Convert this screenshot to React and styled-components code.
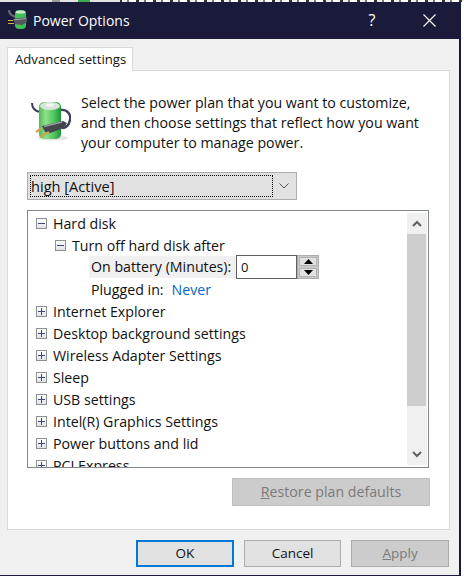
import React from "react";
import styled, { createGlobalStyle } from "styled-components";

const Global = createGlobalStyle`
  html, body { margin: 0; padding: 0; background: #fff; }
  * { box-sizing: border-box; }
`;
const Page = styled.div`
  width: 464px; height: 577px; overflow: hidden; background: #fff;
  font-family: "Open Sans", "Noto Sans", sans-serif; font-size: 14px; color: #111;
`;
const Noise = styled.div`
  height: 2px;
  background:
    linear-gradient(90deg, #e2e2e2 0 52px, #999 52px 60px, #e2e2e2 60px 78px, #3fae4a 78px 90px, #e2e2e2 90px 120px, transparent 120px),
    repeating-linear-gradient(90deg, #333 0 3px, #eee 3px 8px, #777 8px 10px, #fff 10px 17px);
`;
const Win = styled.div`
  width: 461px; height: 574px; background: #f0f0f0;
  border-right: 2px solid #1a1b3a; border-bottom: 1px solid #1a1b3a;
  display: flex; flex-direction: column;
`;
const TitleBar = styled.div`
  height: 37px; flex: none; background: #1a1b3a; color: #fff;
  display: flex; align-items: center; padding: 0 0 1px 8px;
`;
const TitleText = styled.span` font-size: 14px; margin-left: 5px; flex: 1; `;
const Help = styled.span` font-size: 16px; width: 16px; text-align: center; margin-right: 43px; `;
const CloseBox = styled.span` display: flex; margin-right: 23px; `;
const Body = styled.div`
  flex: 1; display: flex; flex-direction: column; padding: 8px 10px 0 7px;
`;
const Tab = styled.div`
  width: 126px; height: 24px; margin-bottom: -1px; position: relative; z-index: 1;
  background: #fff; border: 1px solid #d9d9d9; border-bottom: none;
  font-size: 13.15px; line-height: 23px; padding-left: 7px;
`;
const Panel = styled.div`
  width: 443px; height: 460px; background: #fff; border: 1px solid #d9d9d9;
  padding: 22px 19px 0 19px; display: flex; flex-direction: column;
`;
const Intro = styled.div` display: flex; height: 79px; `;
const IntroIcon = styled.div` width: 54px; padding: 8px 0 0 4px; flex: none; `;
const IntroText = styled.div` font-size: 14.2px; line-height: 20px; white-space: nowrap; `;
const Combo = styled.div`
  width: 270px; height: 28px; background: #e1e1e1; border: 1px solid #adadad;
  padding: 2px; display: flex; align-items: stretch;
`;
const ComboValue = styled.div`
  width: 243px; border: 1px dotted #000; font-size: 14.6px; line-height: 20px;
`;
const ComboArrow = styled.div` flex: 1; display: flex; align-items: center; justify-content: center; `;
const Tree = styled.div`
  margin-top: 10px; width: 402px; height: 258px; border: 1px solid #828790; padding: 1px 1px 2px 8px;
  display: flex; background: #fff;
`;
const Rows = styled.div` flex: 1; height: 255px; overflow: hidden; `;
const Row = styled.div`
  height: 22px; display: flex; align-items: center; padding-left: ${p => p.$indent}px;
  font-size: 14.2px; white-space: nowrap;
`;
const Toggle = styled.span`
  width: 11px; height: 11px; flex: none; margin-right: 6px; border: 1px solid #8e8f8f;
  background: linear-gradient(#fff, #dfe2e8); position: relative;
  &::before { content: ""; position: absolute; left: 1px; right: 1px; top: 4px; height: 1px; background: #3c4a80; }
  ${p => p.$plus && `&::after { content: ""; position: absolute; top: 1px; bottom: 1px; left: 4px; width: 1px; background: #3c4a80; }`}
`;
const SettingLabel = styled.span`
  width: 147px; height: 22px; margin-left: -2px; padding-left: 2px; line-height: 22px;
  background: ${p => p.$hl ? "#f0f0f0" : "transparent"};
`;
const PluggedLabel = styled.span` margin-right: 8px; `;
const LinkValue = styled.span` color: #0066cc; `;
const Spin = styled.div`
  width: 61px; height: 24px; border: 1px solid #5f5f5f; font-size: 13px; line-height: 22px; padding-left: 4px; background: #fff;
`;
const SpinBtns = styled.div`
  width: 22px; height: 24px; border: 1px solid #adadad; background: #c8c8c8; padding: 1px; display: flex; flex-direction: column; gap: 2px;
`;
const SpinBtn = styled.div`
  flex: 1; background: #e1e1e1; border: 1px solid #b4b4b4; display: flex; align-items: center; justify-content: center;
`;
const Scroll = styled.div`
  width: 20px; flex: none; margin-top: 1px; background: #f0f0f0; display: flex; flex-direction: column;
`;
const ScrollBtn = styled.div` height: 21px; flex: none; display: flex; align-items: center; justify-content: center; `;
const Thumb = styled.div` height: 172px; background: #cdcdcd; flex: none; margin-right: 1px; `;
const Track = styled.div` flex: 1; `;
const RestoreRow = styled.div` margin-top: 10px; width: 403px; display: flex; justify-content: flex-end; `;
const Restore = styled.div`
  width: 198px; height: 28px; background: #cccccc; border: 1px solid #bfbfbf; color: #7a7a7a;
  font-size: 14.2px; line-height: 26px; text-align: center;
`;
const Footer = styled.div` display: flex; padding: 10px 0 0 129px; gap: 10px; `;
const Btn = styled.div`
  height: 27px; width: 98px;
  background: ${p => p.$disabled ? "#cccccc" : "#e1e1e1"};
  border: ${p => p.$def ? "2px solid #0078d7" : "1px solid #adadad"};
  color: ${p => p.$disabled ? "#7a7a7a" : "#111"};
  font-size: 13.5px; line-height: ${p => p.$def ? 23 : 25}px; text-align: center;
`;

const PowerIcon = () => (
  <svg width="40" height="40" viewBox="0 0 40 40">
    <defs>
      <linearGradient id="battery" x1="0" x2="1" y1="0" y2="0">
        <stop offset="0" stopColor="#4fb85a" />
        <stop offset=".3" stopColor="#8fe08a" />
        <stop offset=".7" stopColor="#4cc45c" />
        <stop offset="1" stopColor="#1b9438" />
      </linearGradient>
    </defs>
    <ellipse cx="22" cy="37" rx="15" ry="2.5" fill="#e4e4e4" />
    <path d="M1 2 C1 8 4 10 9 11" fill="none" stroke="#3d3f58" strokeWidth="2" />
    <path d="M29 9 C37 8 40 14 39 19 C38 24 35 27 31 27" fill="none" stroke="#3d3f58" strokeWidth="2.4" />
    <rect x="8" y="1" width="22" height="37" rx="5" fill="url(#battery)" />
    <ellipse cx="19" cy="5" rx="10" ry="4" fill="#d7e6da" />
    <ellipse cx="19" cy="4" rx="4" ry="1.5" fill="#f4f7f4" />
    <path d="M11 25 L32 20 L36 22 L33 27 L19 32 L14 31 Z" fill="#44464f" />
    <path d="M13 25.5 L31 21" stroke="#9a9ca4" strokeWidth="1.6" />
    <path d="M11 27 L5 31 M18 31 L9 36" stroke="#c9a44e" strokeWidth="2.2" />
  </svg>
);
const TitleIcon = () => (
  <svg width="20" height="20" viewBox="0 0 20 20">
    <path d="M1 0 C1 4 4 6 8 7" fill="none" stroke="#6a6c78" strokeWidth="2" />
    <rect x="7" y="0" width="11" height="19" rx="4" fill="#3fbf55" />
    <ellipse cx="12.5" cy="2" rx="5" ry="1.6" fill="#cfe8d2" />
    <path d="M5 9 L19 7 L19 12 L14 15 L7 14 Z" fill="#55575f" />
    <path d="M6 10 L18 8.5" stroke="#a2a4ab" strokeWidth="1" />
    <path d="M0 10.5 H5 M0 13.5 H6" stroke="#d9b24a" strokeWidth="1.2" />
  </svg>
);
const Caret = ({ up, color = "#000" }) => (
  <svg width="9" height="5" viewBox="0 0 9 5"><path d={up ? "M4.5 0 L9 5 H0 Z" : "M0 0 H9 L4.5 5 Z"} fill={color} /></svg>
);
const Chev = ({ up }) => (
  <svg width="10" height="7" viewBox="0 0 10 7">
    <path d={up ? "M1 6 L5 2 L9 6" : "M1 1 L5 5 L9 1"} fill="none" stroke="#606060" strokeWidth="2" />
  </svg>
);

const groups = ["Internet Explorer","Desktop background settings","Wireless Adapter Settings","Sleep","USB settings","Intel(R) Graphics Settings","Power buttons and lid","PCI Express"];

export default function App() {
  return (
    <Page>
      <Global />
      <Noise />
      <Win>
        <TitleBar>
          <TitleIcon />
          <TitleText>Power Options</TitleText>
          <Help>?</Help>
          <CloseBox>
            <svg width="13" height="13" viewBox="0 0 13 13"><path d="M.5 .5 L12.5 12.5 M12.5 .5 L.5 12.5" stroke="#fff" strokeWidth="1.1" /></svg>
          </CloseBox>
        </TitleBar>
        <Body>
          <Tab>Advanced settings</Tab>
          <Panel>
            <Intro>
              <IntroIcon><PowerIcon /></IntroIcon>
              <IntroText>
                Select the power plan that you want to customize,<br />
                and then choose settings that reflect how you want<br />
                your computer to manage power.
              </IntroText>
            </Intro>
            <Combo>
              <ComboValue>high [Active]</ComboValue>
              <ComboArrow>
                <svg width="10" height="6" viewBox="0 0 10 6"><path d="M.5 .5 L5 5 L9.5 .5" fill="none" stroke="#555" /></svg>
              </ComboArrow>
            </Combo>
            <Tree>
              <Rows>
                <Row $indent={0}><Toggle />Hard disk</Row>
                <Row $indent={19}><Toggle />Turn off hard disk after</Row>
                <Row $indent={55}>
                  <SettingLabel $hl>On battery (Minutes):</SettingLabel>
                  <Spin>0</Spin>
                  <SpinBtns>
                    <SpinBtn><Caret up /></SpinBtn>
                    <SpinBtn><Caret /></SpinBtn>
                  </SpinBtns>
                </Row>
                <Row $indent={55}><PluggedLabel>Plugged in:</PluggedLabel><LinkValue>Never</LinkValue></Row>
                {groups.map(g => <Row key={g} $indent={0}><Toggle $plus />{g}</Row>)}
              </Rows>
              <Scroll>
                <ScrollBtn><Chev up /></ScrollBtn>
                <Thumb />
                <Track />
                <ScrollBtn><Chev /></ScrollBtn>
              </Scroll>
            </Tree>
            <RestoreRow><Restore><u>R</u>estore plan defaults</Restore></RestoreRow>
          </Panel>
          <Footer>
            <Btn $def>OK</Btn>
            <Btn>Cancel</Btn>
            <Btn $disabled><u>A</u>pply</Btn>
          </Footer>
        </Body>
      </Win>
    </Page>
  );
}
